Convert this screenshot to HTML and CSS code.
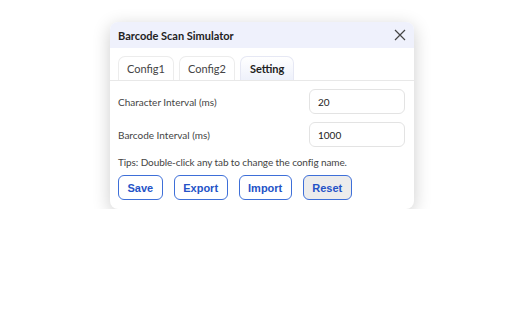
FILE: index.html
```html
<!DOCTYPE html>
<html lang="en">
<head>
    <meta charset="UTF-8">
    <title>Barcode Scan Simulator</title>
    <link rel="stylesheet" href="styles.css">
</head>
<body>
    <div class="stage">
        <div class="panel">
            <div class="panel-header">
                <span class="panel-title">Barcode Scan Simulator</span>
                <button type="button" class="close-btn" aria-label="Close">
                    <svg width="12" height="12" viewBox="0 0 12 12">
                        <path d="M1 1 L11 11 M11 1 L1 11" stroke="#444" stroke-width="1.2" fill="none"/>
                    </svg>
                </button>
            </div>

            <div class="tabs">
                <div class="tab">Config1</div>
                <div class="tab">Config2</div>
                <div class="tab active">Setting</div>
            </div>

            <div class="settings">
                <div class="field-row">
                    <label for="charInterval">Character Interval (ms)</label>
                    <input id="charInterval" type="text" value="20">
                </div>
                <div class="field-row">
                    <label for="barcodeInterval">Barcode Interval (ms)</label>
                    <input id="barcodeInterval" type="text" value="1000">
                </div>

                <p class="tips">Tips: Double-click any tab to change the config name.</p>

                <div class="actions">
                    <button type="button" class="action-btn">Save</button>
                    <button type="button" class="action-btn">Export</button>
                    <button type="button" class="action-btn">Import</button>
                    <button type="button" class="action-btn reset">Reset</button>
                </div>
            </div>
        </div>
    </div>
</body>
</html>
```

FILE: styles.css
```css
body {
    margin: 0;
    background: #fff;
    font-family: Lato, 'Noto Sans', sans-serif;
    color: #333;
}

.stage {
    padding: 22px 0 0 110px;
}

.panel {
    width: 304px;
    background: #fff;
    border-radius: 8px;
    box-shadow: 0 4px 18px rgba(0, 0, 0, 0.2);
    overflow: hidden;
}

.panel-header {
    height: 26px;
    display: flex;
    align-items: center;
    justify-content: space-between;
    padding: 0 8px;
    background: #eff1fc;
}

.panel-title {
    font-size: 11px;
    font-weight: bold;
    color: #222;
}

.close-btn {
    border: none;
    background: transparent;
    padding: 0;
    display: flex;
    cursor: pointer;
}

.tabs {
    display: flex;
    gap: 5px;
    padding: 8px 8px 0;
    border-bottom: 1px solid #e8e8e8;
}

.tab {
    height: 24px;
    display: flex;
    align-items: center;
    padding: 0 8px;
    border: 1px solid #ececec;
    border-bottom: none;
    border-radius: 7px 7px 0 0;
    font-size: 11px;
    color: #444;
    box-sizing: border-box;
}

.tab.active {
    padding: 0 9px;
    font-weight: bold;
    color: #222;
    background: linear-gradient(#fff, #eef1fb);
    border-color: #e6e8f4;
}

.settings {
    padding: 8px 9px 9px 8px;
}

.field-row {
    display: flex;
    align-items: center;
    justify-content: space-between;
    margin-bottom: 8px;
}

.field-row label {
    font-size: 10px;
    color: #444;
}

.field-row input {
    width: 96px;
    height: 25px;
    box-sizing: border-box;
    border: 1px solid #e3e3e3;
    border-radius: 6px;
    padding: 0 8px;
    font-family: Lato, sans-serif;
    font-size: 10px;
    color: #222;
}

.tips {
    margin: 4px 0 6px;
    font-size: 10px;
    line-height: 14px;
    letter-spacing: -0.1px;
    color: #444;
}

.actions {
    display: flex;
    gap: 11px;
}

.action-btn {
    height: 25px;
    padding: 0 8.5px;
    border: 1px solid #3e6fd8;
    border-radius: 6px;
    background: #fff;
    color: #2453c7;
    font-family: 'Liberation Sans', Arial, sans-serif;
    font-size: 11px;
    font-weight: bold;
    cursor: pointer;
}

.action-btn.reset {
    background: #ececec;
}
```
